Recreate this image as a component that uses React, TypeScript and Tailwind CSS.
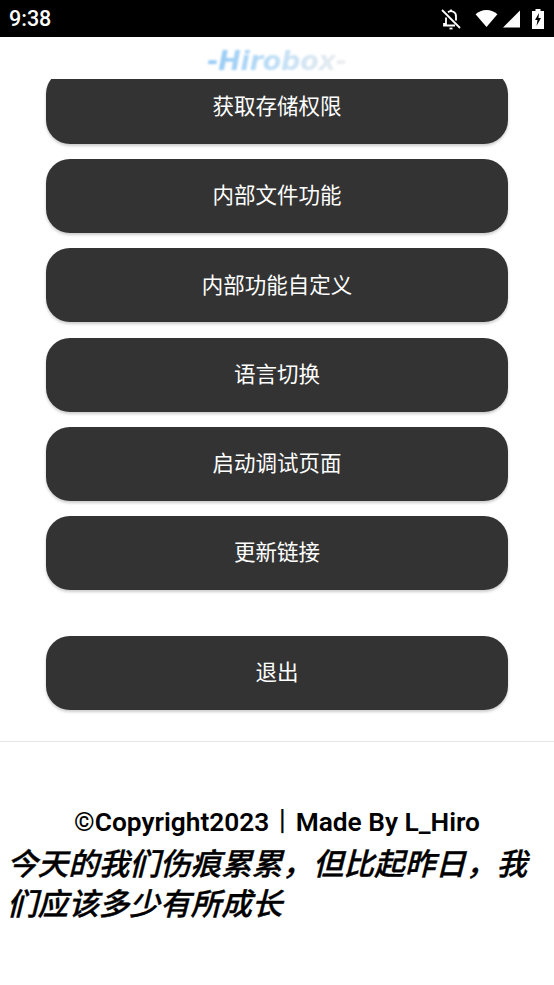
import React from 'react';

const menuItems = ['获取存储权限', '内部文件功能', '内部功能自定义', '语言切换', '启动调试页面', '更新链接'];

const cjk = "font-['Roboto','Noto_Sans_CJK_SC',sans-serif]";

function MenuButton({ label }: { label: string }) {
  return (
    <button className="flex h-[74px] w-[462px] shrink-0 items-center justify-center rounded-[24px] bg-[#333333] pt-[1px] text-[21.5px] font-normal text-white shadow-[0_2px_3px_rgba(0,0,0,0.2)]">
      {label}
    </button>
  );
}

function StatusBar() {
  return (
    <div className="flex h-[37px] items-center justify-between bg-black pl-[9px] pr-[10px] text-white">
      <span className="pt-[1px] text-[21.5px] font-medium leading-none">9:38</span>
      <div className="flex items-center">
        {/* bell off */}
        <svg width="24" height="24" viewBox="0 0 24 24" fill="none" stroke="white" strokeWidth="1.8" className="mr-[12px]">
          <path d="M7 10.500V17H5v1.500h11" />
          <path d="M9 5.200A5 5 0 0 1 17 9.500v4" />
          <path d="M12 2.500v2" />
          <path d="M10.500 21.500h3" />
          <path d="M3 3l18 18" />
        </svg>
        {/* wifi */}
        <svg width="23" height="19" viewBox="0 0 24 20" fill="white" className="mr-[5px]">
          <path d="M0.500 5.500C3.500 2.700 7.500 1 12 1s8.500 1.700 11.500 4.500L12 19z" />
        </svg>
        {/* signal */}
        <svg width="18" height="18" viewBox="0 0 18 18" fill="white" className="mr-[11px]">
          <path d="M17 0.500V17.500H0z" />
        </svg>
        {/* battery charging */}
        <svg width="12" height="20" viewBox="0 0 12 20">
          <path d="M3.500 0h5v2H12v18H0V2h3.500z" fill="white" />
          <path d="M7 4L3 11h2.500L4.500 17 9 9H6.500z" fill="black" />
        </svg>
      </div>
    </div>
  );
}

export default function App() {
  return (
    <div className={`flex h-[985px] w-[554px] flex-col overflow-hidden bg-white ${cjk}`}>
      <StatusBar />

      {/* Logo */}
      <div className="flex h-[42px] shrink-0 items-center justify-center pt-[5px]">
        <span className="bg-gradient-to-r from-[#90c8f4] via-[#c0dff6] to-[#eeeeee] bg-clip-text font-['DejaVu_Sans',sans-serif] text-[27px] font-bold italic leading-none tracking-[-0.2px] text-transparent blur-[1px]">
          -Hirobox-
        </span>
      </div>

      {/* Scrolled menu list */}
      <div className="h-[663px] shrink-0 overflow-hidden border-b border-[#e4e4e4]">
        <div className="-mt-[9.25px] flex flex-col items-center gap-[15.25px]">
          {menuItems.map((item) => (
            <MenuButton key={item} label={item} />
          ))}
          <div className="mt-[30.75px]">
            <MenuButton label="退出" />
          </div>
        </div>
      </div>

      {/* Footer */}
      <div className="pt-[63px]">
        <div className="text-center text-[26.3px] font-semibold leading-[34px] text-black">
          ©Copyright2023<span className="font-normal">丨</span>Made By L_Hiro
        </div>
        <div className="mt-[6px] px-[7px] text-[30.6px] font-medium italic leading-[40px] text-black [-webkit-text-stroke:0.35px_black]">
          今天的我们伤痕累累，但比起昨日，我们应该多少有所成长
        </div>
      </div>
    </div>
  );
}
